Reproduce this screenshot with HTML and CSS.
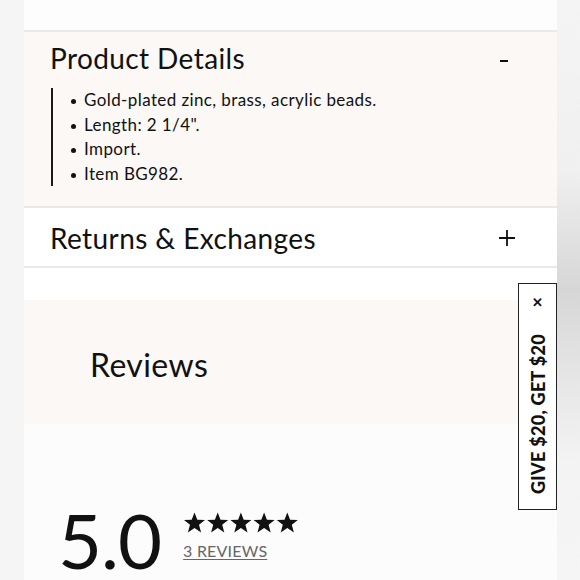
FILE: index.html
```html
<!DOCTYPE html>
<html lang="en">
<head>
  <meta charset="UTF-8" />
  <meta name="viewport" content="width=device-width, initial-scale=1" />
  <title>Product Details</title>
  <link rel="stylesheet" href="styles.css">
</head>
<body>

  <div class="gutter-left"></div>

  <main class="content">
    <div class="top-space"></div>

    <section class="accordion-item open">
      <div class="accordion-head">
        <h2>Product Details</h2>
        <svg class="toggle-icon" width="10" height="4" viewBox="0 0 10 4" aria-hidden="true">
          <rect x="1" y="1" width="8" height="2" fill="#111" />
        </svg>
      </div>
      <ul class="details-list">
        <li>Gold-plated zinc, brass, acrylic beads.</li>
        <li>Length: 2 1/4".</li>
        <li>Import.</li>
        <li>Item BG982.</li>
      </ul>
    </section>

    <section class="accordion-item last">
      <div class="accordion-head">
        <h2>Returns &amp; Exchanges</h2>
        <svg class="toggle-icon" width="18" height="18" viewBox="0 0 18 18" aria-hidden="true">
          <path d="M9 1v16M1 9h16" stroke="#111" stroke-width="1.8" fill="none" />
        </svg>
      </div>
    </section>

    <div class="gap"></div>

    <section class="reviews-head">
      <h2>Reviews</h2>
    </section>

    <section class="review-summary">
      <div class="score">5.0</div>
      <div class="score-meta">
        <div class="stars" aria-label="5 out of 5 stars">
          <svg width="116" height="21" viewBox="0 0 116 21" aria-hidden="true">
            <defs>
              <polygon id="star" points="11.5,0.5 14.3,7.7 22,8 16,12.8 18.1,20.4 11.5,16.1 4.9,20.4 7,12.8 1,8 8.7,7.7" />
            </defs>
            <use href="#star" x="0" fill="#111" />
            <use href="#star" x="23.2" fill="#111" />
            <use href="#star" x="46.4" fill="#111" />
            <use href="#star" x="69.6" fill="#111" />
            <use href="#star" x="92.8" fill="#111" />
          </svg>
        </div>
        <a class="review-count" href="#">3 REVIEWS</a>
      </div>
    </section>
  </main>

  <div class="gutter-right"></div>

  <aside class="referral-tab">
    <span class="referral-close">&#x2715;</span>
    <span class="referral-text">GIVE $20, GET $20</span>
  </aside>

</body>
</html>
```

FILE: styles.css
```css
body {
  margin: 0;
  display: flex;
  height: 580px;
  font-family: Lato, "Open Sans", sans-serif;
  color: #111;
  background: #f6f6f6;
  overflow: hidden;
}
.gutter-left {
  width: 24px;
  flex-shrink: 0;
  background: #f5f5f5;
}
.gutter-right {
  width: 23px;
  flex-shrink: 0;
  background: linear-gradient(to bottom, #f4f4f4 0, #f0f0f0 170px, #d6d6d6 290px, #e6e6e6 380px, #f3f3f3 460px, #f5f5f5 100%);
}
.content {
  flex: 1;
  background: #fcfcfc;
}
.top-space {
  height: 30px;
  background: #fdfdfd;
}
.accordion-item {
  border-top: 2px solid #e9e9e9;
  background: #fff;
}
.accordion-item.last {
  border-bottom: 2px solid #e9e9e9;
}
.accordion-item.open {
  background: #fbf8f5;
  padding-bottom: 20px;
}
.accordion-head {
  display: flex;
  align-items: center;
  justify-content: space-between;
  padding: 13px 41px 12px 26px;
  height: 33px;
}
.accordion-item.open .accordion-head {
  padding-top: 10px;
  padding-bottom: 13px;
  align-items: flex-start;
}
.accordion-head h2 {
  margin: 0;
  font-size: 28px;
  font-weight: 400;
  line-height: 32px;
  letter-spacing: 0.4px;
}
.accordion-item.open .toggle-icon {
  margin-top: 17px;
  margin-right: 7px;
}
.details-list {
  list-style: none;
  margin: 0 0 0 27px;
  padding: 0 0 0 18px;
  border-left: 2px solid #1a1a1a;
}
.details-list li {
  position: relative;
  font-size: 17px;
  line-height: 24.5px;
  letter-spacing: 0.4px;
  padding-left: 13px;
}
.details-list li::before {
  content: "";
  position: absolute;
  left: 0;
  top: 11px;
  width: 5px;
  height: 5px;
  border-radius: 50%;
  background: #111;
}
.gap {
  height: 32px;
  background: #fff;
}
.reviews-head {
  background: #fbf8f5;
  height: 118px;
  padding: 6px 0 0 66px;
  display: flex;
  align-items: center;
}
.reviews-head h2 {
  margin: 0;
  font-size: 32px;
  font-weight: 400;
  line-height: 40px;
  letter-spacing: 0.4px;
}
.review-summary {
  display: flex;
  align-items: flex-start;
  gap: 22px;
  padding: 78px 0 0 34px;
}
.score {
  font-size: 76px;
  line-height: 76px;
  font-weight: 400;
  letter-spacing: -1px;
}
.score-meta {
  padding-top: 10px;
}
.stars svg {
  display: block;
}
.review-count {
  display: inline-block;
  margin-top: 8px;
  font-size: 16px;
  color: #666;
  text-decoration: underline;
  text-underline-offset: 2px;
  letter-spacing: 0.2px;
}
.referral-tab {
  position: fixed;
  top: 283px;
  right: 23px;
  width: 37px;
  height: 225px;
  border: 1px solid #222;
  background: #fff;
  display: flex;
  flex-direction: column;
  align-items: center;
}
.referral-close {
  margin-top: 12px;
  font-size: 13px;
  font-weight: 900;
  line-height: 13px;
}
.referral-text {
  margin-top: 25px;
  writing-mode: vertical-rl;
  transform: rotate(180deg);
  font-size: 18px;
  font-weight: 900;
  letter-spacing: 0.3px;
}
```
